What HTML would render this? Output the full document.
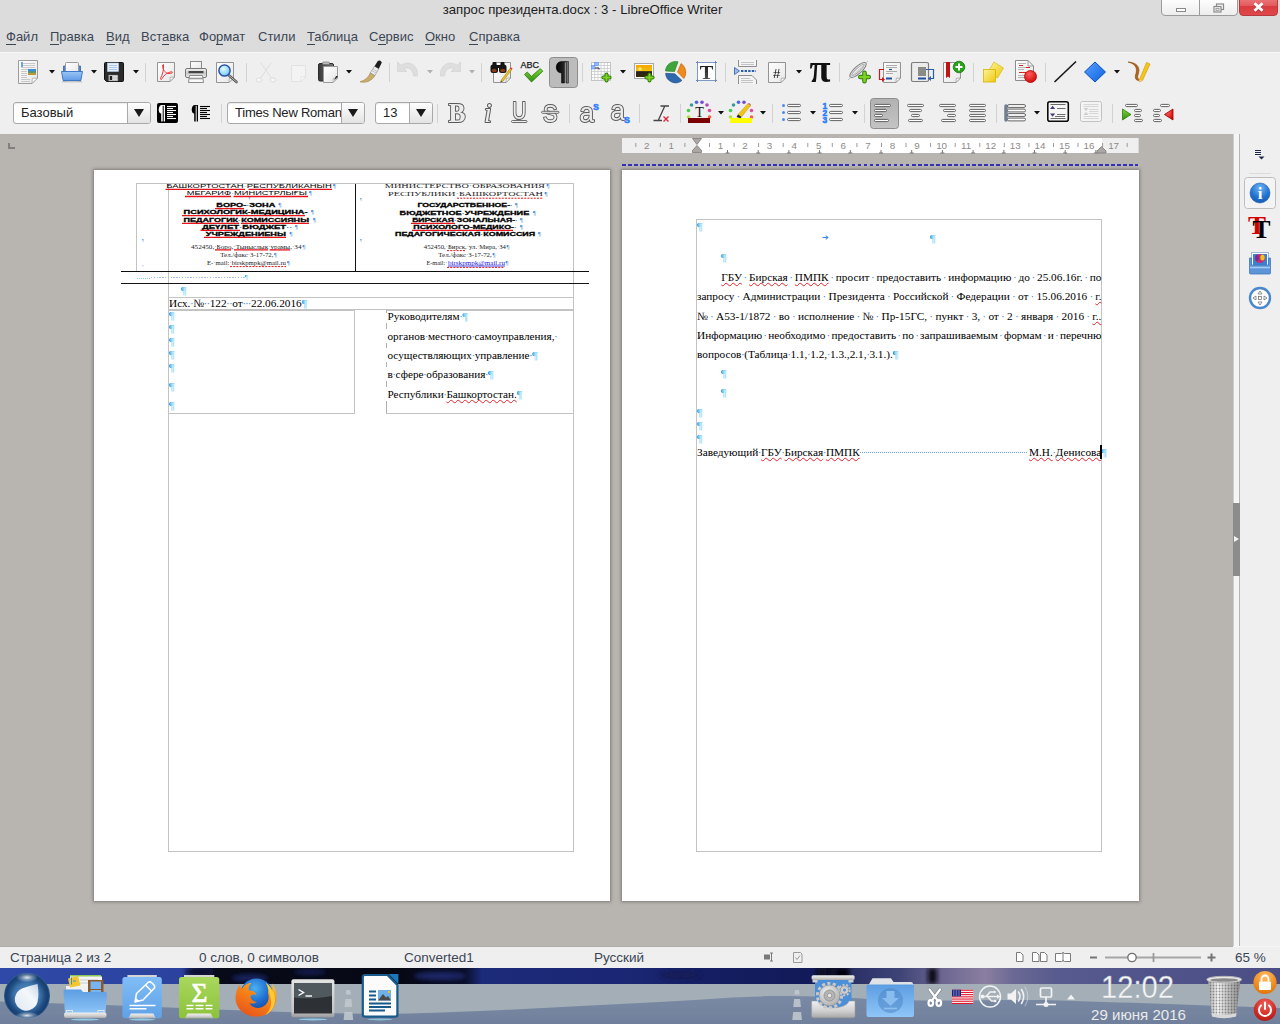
<!DOCTYPE html><html lang="ru"><head><meta charset="utf-8"><title>запрос президента.docx : 3 - LibreOffice Writer</title><style>
*{box-sizing:border-box}
html,body{margin:0;padding:0}
body{width:1280px;height:1024px;overflow:hidden;position:relative;background:#b8b4b0;font-family:"Liberation Sans",sans-serif;font-size:13px;color:#2e3436}
.abs,.t1,.t2,.h,.ui{position:absolute}
#title{position:absolute;left:0;top:0;width:1280px;height:52px;background:#dcdcdc}
#title .cap{position:absolute;left:0;width:1165px;top:2px;text-align:center;font-size:13.2px;color:#1c1c1c;line-height:16px}
.menu{position:absolute;top:28px;font-size:13px;line-height:18px;color:#3b4655}
.menu .mu{position:absolute;top:15.5px;height:1px;background:#3b4655}
#tb{position:absolute;left:0;top:52px;width:1280px;height:82px;background:#efefef;border-top:1px solid #f7f7f7}
.sep{position:absolute;width:1px;height:20px;background:#cfcfcf}
.dd{position:absolute;width:0;height:0;border-left:3px solid transparent;border-right:3px solid transparent;border-top:4px solid #1a1a1a}
.dd.dis{border-top-color:#c4c4c4}
.combo{position:absolute;height:22px;background:#fff;border:1px solid #a9a9a9;border-radius:3px;font-size:13px;line-height:20px;color:#222;padding-left:7px;overflow:hidden;white-space:nowrap;box-shadow:inset 0 1px 1px rgba(0,0,0,.08)}
.combo .btn{position:absolute;right:0;top:0;width:23px;height:20px;border-left:1px solid #a9a9a9;background:linear-gradient(#fdfdfd,#e3e3e3)}
.combo .btn:after{content:"";position:absolute;left:6px;top:6px;border-left:5px solid transparent;border-right:5px solid transparent;border-top:8px solid #1a1a1a}
.pressed{position:absolute;background:linear-gradient(#b4b4b4,#c2c2c2);border:1px solid #8e8e8e;border-radius:3px}
svg{position:absolute;overflow:visible}
#doc{position:absolute;left:0;top:134px;width:1233px;height:812px;background:#b8b4b0;overflow:hidden}
.page{position:absolute;background:#fff;box-shadow:0 0 3px 1px rgba(60,55,50,.45)}
.fr{position:absolute;border:1px solid #c3c3c3}
.t1,.t2,.t3{position:absolute;font-family:"Liberation Serif",serif;color:#000;white-space:nowrap;line-height:14px}
.t2{font-size:11.27px}
.t1{font-size:11.2px}
.t3{font-size:11.27px}
i{font-style:normal;display:inline-block;width:.25em;text-indent:-.04em;color:#3d7fd6;overflow:visible}
b.p,.pm{text-shadow:.6px 0 0 rgba(140,212,245,.75);background:linear-gradient(90deg,#2a82d6 0,#2a82d6 44%,#86d2f4 50%,#86d2f4 100%);-webkit-background-clip:text;background-clip:text;-webkit-text-fill-color:transparent}
b.p{font-weight:normal}
.jl{display:flex;justify-content:space-between}
.jl i{width:auto;text-indent:0;margin:0 -.04em}
.sq{text-decoration:underline wavy #e8202a;text-decoration-thickness:.55px;text-underline-offset:.6px;text-decoration-skip-ink:none}
.pm{position:absolute;font-family:"Liberation Serif",serif;font-size:11.27px;line-height:14px;color:#3d7fd6}
#status{position:absolute;left:0;top:946px;width:1280px;height:22px;background:#efefef;border-top:1px solid #f6f6f6;font-size:13.5px;color:#3b4655;line-height:21px}
#status span{position:absolute;top:0;white-space:nowrap}
#side{position:absolute;left:1233px;top:134px;width:47px;height:812px;background:#efefef}
#task{position:absolute;left:0;top:968px;width:1280px;height:56px;overflow:hidden;background:#2d3f8c}
</style></head><body>
<div id="title"><div class="cap">запрос президента.docx : 3 - LibreOffice Writer</div>
<div class="menu" style="left:6px">Файл<span class="mu" style="left:0px;width:9.9px"></span></div>
<div class="menu" style="left:50px">Правка<span class="mu" style="left:0px;width:9.3px"></span></div>
<div class="menu" style="left:106px">Вид<span class="mu" style="left:0px;width:8.7px"></span></div>
<div class="menu" style="left:141px">Вставка<span class="mu" style="left:21.1px;width:7.1px"></span></div>
<div class="menu" style="left:199px">Формат<span class="mu" style="left:17.1px;width:7.2px"></span></div>
<div class="menu" style="left:258px">Стили</div>
<div class="menu" style="left:307px">Таблица<span class="mu" style="left:0px;width:8px"></span></div>
<div class="menu" style="left:369px">Сервис<span class="mu" style="left:9.4px;width:7.2px"></span></div>
<div class="menu" style="left:425px">Окно<span class="mu" style="left:0px;width:10.1px"></span></div>
<div class="menu" style="left:469px">Справка<span class="mu" style="left:0px;width:9.4px"></span></div>
<div class="abs" style="left:1161px;top:-3px;width:39px;height:19px;border:1px solid #9b9b9b;border-radius:0 0 0 4px;background:linear-gradient(#fff,#ededed)"></div><div class="abs" style="left:1199px;top:-3px;width:39px;height:19px;border:1px solid #9b9b9b;border-radius:0 0 4px 0;background:linear-gradient(#fff,#ededed)"></div><div class="abs" style="left:1239px;top:-3px;width:39px;height:19px;border:1px solid #b8393c;border-radius:0 0 4px 4px;background:linear-gradient(#ec7a7c 0,#e35a5d 45%,#d93c40 50%,#e0474a 100%)"></div><svg style="left:1160px;top:0" width="120" height="18" viewBox="1160 0 120 18"><rect x="1176.5" y="8.5" width="9" height="3" fill="#fff" stroke="#8a8a8a" stroke-width="1"/><rect x="1216.5" y="4" width="7" height="5.5" fill="none" stroke="#8a8a8a" stroke-width="1.2"/><rect x="1214" y="6.5" width="7" height="5.5" fill="#f4f4f4" stroke="#8a8a8a" stroke-width="1.2"/><rect x="1216" y="8.3" width="3" height="2" fill="none" stroke="#8a8a8a" stroke-width="0.8"/><path d="M1254.5 3.2 L1262.5 10.8 M1262.5 3.2 L1254.5 10.8" stroke="#8c2022" stroke-width="3.6" opacity=".35" transform="translate(0,.8)"/><path d="M1254.5 3.2 L1262.5 10.8 M1262.5 3.2 L1254.5 10.8" stroke="#fff" stroke-width="2.8"/></svg>
</div>
<div id="tb">
<svg style="left:0;top:-1px" width="1280" height="82" viewBox="0 52 1280 82"><defs>
<linearGradient id="gpage" x1="0" y1="0" x2="1" y2="1"><stop offset="0" stop-color="#ffffff"/><stop offset="1" stop-color="#e6e6e6"/></linearGradient>
<linearGradient id="gblue" x1="0" y1="0" x2="0" y2="1"><stop offset="0" stop-color="#9cc6f6"/><stop offset="1" stop-color="#5f9ae6"/></linearGradient>
<linearGradient id="gdia" x1="0" y1="0" x2="1" y2="1"><stop offset="0" stop-color="#5aa5ff"/><stop offset="1" stop-color="#0b5fe0"/></linearGradient>
<linearGradient id="gdark" x1="0" y1="0" x2="1" y2="0"><stop offset="0" stop-color="#3a3a3a"/><stop offset="1" stop-color="#777"/></linearGradient>
<linearGradient id="gmetal" x1="0" y1="0" x2="0" y2="1"><stop offset="0" stop-color="#f4f4f4"/><stop offset=".5" stop-color="#c9c9c9"/><stop offset="1" stop-color="#efefef"/></linearGradient>
<linearGradient id="gyel" x1="0" y1="0" x2="1" y2="1"><stop offset="0" stop-color="#fdf39a"/><stop offset="1" stop-color="#edc80e"/></linearGradient>
<radialGradient id="glens" cx=".4" cy=".35" r=".7"><stop offset="0" stop-color="#e8fbff"/><stop offset="1" stop-color="#67c6f2"/></radialGradient>
<radialGradient id="gred" cx=".4" cy=".3" r=".8"><stop offset="0" stop-color="#ff5a5a"/><stop offset="1" stop-color="#cc0000"/></radialGradient>
<linearGradient id="gsun" x1="0" y1="0" x2="0" y2="1"><stop offset="0" stop-color="#f7a400"/><stop offset=".5" stop-color="#f2c200"/><stop offset=".55" stop-color="#222"/><stop offset="1" stop-color="#3a2a00"/></linearGradient>
<linearGradient id="gpil" x1="0" y1="0" x2="1" y2="0"><stop offset="0" stop-color="#000"/><stop offset=".6" stop-color="#222"/><stop offset="1" stop-color="#8a8a8a"/></linearGradient>
<linearGradient id="gT" x1="0" y1="0" x2="0" y2="1"><stop offset="0" stop-color="#111"/><stop offset="1" stop-color="#5a5a5a"/></linearGradient><linearGradient id="ggreen" x1="0" y1="0" x2="0" y2="1"><stop offset="0" stop-color="#7fd63a"/><stop offset="1" stop-color="#2f8d0c"/></linearGradient>
<linearGradient id="gpress" x1="0" y1="0" x2="0" y2="1"><stop offset="0" stop-color="#b2b2b2"/><stop offset="1" stop-color="#c4c4c4"/></linearGradient></defs><path d="M18.5 60.5 H37.5 V78 L32 83.5 H18.5 Z" fill="url(#gpage)" stroke="#9c9c9c" stroke-width="1" stroke-linejoin="round"/><path d="M37.5 78 L32 83.5 L32.3 78.3 Z" fill="#fff" stroke="#9c9c9c" stroke-width=".7" stroke-linejoin="round"/><path d="M21 63.5 H35" stroke="#c9c9c9" stroke-width="1"/><path d="M21 65.5 H35" stroke="#c9c9c9" stroke-width="1"/><path d="M21 67.5 H35" stroke="#c9c9c9" stroke-width="1"/><path d="M21 69.5 H35" stroke="#c9c9c9" stroke-width="1"/><path d="M21 71.5 H27" stroke="#c9c9c9" stroke-width="1"/><path d="M21 73.5 H27" stroke="#c9c9c9" stroke-width="1"/><path d="M21 75.5 H27" stroke="#c9c9c9" stroke-width="1"/><path d="M21 77.5 H27" stroke="#c9c9c9" stroke-width="1"/><path d="M21 79.5 H30" stroke="#c9c9c9" stroke-width="1"/><path d="M21 81.5 H30" stroke="#c9c9c9" stroke-width="1"/><rect x="21" y="62" width="2" height="5" fill="#6fa3e0"/><rect x="28" y="69" width="8" height="6" fill="#3f8fd6"/><rect x="28" y="72.5" width="8" height="2.5" fill="#b79a3a"/><rect x="28" y="71.5" width="8" height="1.2" fill="#5d9a4a"/><path d="M49 70 h6 l-3 3.6 z" fill="#111"/><path d="M63.5 66 h3 v15 h-3 z M77.5 66 h3 v15 h-3z" fill="#4a86d6" stroke="#3465a4" stroke-width=".8"/><rect x="65.5" y="62.5" width="13" height="12" rx="1" fill="url(#gpage)" stroke="#9a9a9a"/><path d="M61.5 71.5 H82.500 L80.8 80.5 H63.2 Z" fill="url(#gblue)" stroke="#3f78c9" stroke-width="1" stroke-linejoin="round"/><path d="M62 81.8 H82" stroke="#b4b4b4" stroke-width="1"/><path d="M91 70 h6 l-3 3.6 z" fill="#111"/><path d="M104.500 63.5 q0-1 1-1 h17 q1 0 1 1 v17 q0 1-1 1 h-16 l-2 -2 z" fill="#2b2b2b" stroke="#111" stroke-width="1"/><rect x="107.500" y="63" width="11" height="8.5" fill="#e6f0fb" stroke="#b9cfe8" stroke-width=".6"/><path d="M109 65.500 h8 M109 67.500 h8 M109 69.500 h8" stroke="#9dbfe6" stroke-width=".8"/><rect x="108.500" y="75" width="9.5" height="6" fill="url(#gmetal)" stroke="#555" stroke-width=".6"/><rect x="109.700" y="76" width="2.400" height="4" fill="#222"/><path d="M133 70 h6 l-3 3.6 z" fill="#111"/><path d="M145.5 63 V82" stroke="#d2d2d2" stroke-width="1"/><path d="M157.5 62.5 H174.5 V77 L170 81.5 H157.5 Z" fill="url(#gpage)" stroke="#939393" stroke-width="1" stroke-linejoin="round"/><path d="M174.5 77 L170 81.5 L170.3 77.3 Z" fill="#fff" stroke="#939393" stroke-width=".7" stroke-linejoin="round"/><path d="M163.500 64.500 c-1.500 0 -1 3 0 5 c1.500 3 4 5 8.500 3.500 c1 -.4 .4 -1.600 -1 -1.200 c-4 1 -7 3 -9 7 c-.6 1.200 -2 .6 -1.400 -.6 c2 -4 3.300 -8 2.900 -13.700 z" fill="none" stroke="#e8262a" stroke-width=".9" stroke-linejoin="round"/><rect x="190.500" y="61.500" width="11" height="8" fill="url(#gpage)" stroke="#8a8a8a"/><rect x="185.500" y="68.500" width="21" height="9" rx="1.500" fill="url(#gmetal)" stroke="#777"/><rect x="188.500" y="71" width="15" height="2.200" fill="#444"/><path d="M189.500 75.500 H202.500 L203.500 82.500 H188.500 Z" fill="#fafafa" stroke="#8a8a8a"/><path d="M189 78.500 h14" stroke="#999" stroke-width="1.600"/><path d="M216.5 62.5 H233.5 V78 L229 82.5 H216.5 Z" fill="url(#gpage)" stroke="#939393" stroke-width="1" stroke-linejoin="round"/><path d="M233.5 78 L229 82.5 L229.3 78.3 Z" fill="#fff" stroke="#939393" stroke-width=".7" stroke-linejoin="round"/><path d="M228.500 75 L236.500 82" stroke="#555" stroke-width="2.600" stroke-linecap="round"/><path d="M228.500 75 L236.500 82" stroke="#b9b9b9" stroke-width="1" stroke-linecap="round"/><circle cx="224.500" cy="70.500" r="5.600" fill="url(#glens)" stroke="#2c55a8" stroke-width="1.500"/><path d="M246.5 63 V82" stroke="#d2d2d2" stroke-width="1"/><g stroke="#dedede" fill="none" stroke-width="1"><path d="M261 63 L272 79 M271 63 L260 79"/><ellipse cx="259" cy="80" rx="3" ry="2" fill="#f6f6f6"/><ellipse cx="273" cy="80" rx="3" ry="2" fill="#f6f6f6"/></g><path d="M291.500 65.500 H305.500 V77 L301 81.500 H291.500 Z" fill="#f3f3f3" stroke="#e2e2e2"/><path d="M305.500 77 L301 81.500 L301 77 Z" fill="#fafafa" stroke="#dcdcdc" stroke-width=".7"/><rect x="318.500" y="63.500" width="15" height="17.500" rx="1.500" fill="url(#gdark)" stroke="#2a2a2a"/><rect x="322.500" y="62" width="7" height="2.600" rx="1" fill="#bdbdbd" stroke="#666" stroke-width=".6"/><path d="M323.5 66.5 H337.5 V78 L333 82.5 H323.5 Z" fill="url(#gpage)" stroke="#9a9a9a" stroke-width="1" stroke-linejoin="round"/><path d="M337.5 78 L333 82.5 L333.3 78.3 Z" fill="#fff" stroke="#9a9a9a" stroke-width=".7" stroke-linejoin="round"/><path d="M334 80.500 l3.500 -3.500 v-1 h-1.500 z" fill="#222"/><path d="M346 70 h6 l-3 3.6 z" fill="#111"/><path d="M360 81.800 C365 80.500 368.500 77.500 370.500 72.500 L375 75.300 C372.500 80.500 366 83.500 360 81.800 Z" fill="#c9ad6a" stroke="#9d8243" stroke-width=".6"/><path d="M370.300 72.800 L374.500 66.200 L378.800 68.800 L375 75.500 Z" fill="#ececec" stroke="#8a8a8a" stroke-width=".6"/><path d="M372 70.500 l4 2.500 M373 69 l4 2.500" stroke="#aaa" stroke-width=".6"/><path d="M374.500 66.200 L377.800 61 Q380.500 59.800 381.800 62.400 L378.800 68.800 Z" fill="#1e1e1e"/><path d="M389.5 63 V82" stroke="#d2d2d2" stroke-width="1"/><path d="M397.500 62 L397.500 71.500 L407 71.500 L404 68.600 C408 66.500 413 69 413.500 76 L417.500 76 C418.500 66 410 59.500 401 65.200 Z" fill="#dedede" stroke="#d0d0d0" stroke-width=".6"/><path d="M427 70 h6 l-3 3.6 z" fill="#b0b0b0"/><path d="M460.500 62 L460.500 71.500 L451 71.500 L454 68.600 C450 66.500 445 69 444.500 76 L440.500 76 C439.500 66 448 59.500 457 65.200 Z" fill="#dedede" stroke="#d0d0d0" stroke-width=".6"/><path d="M469 70 h6 l-3 3.6 z" fill="#b0b0b0"/><path d="M481.5 63 V82" stroke="#d2d2d2" stroke-width="1"/><path d="M493.5 62.5 H510.5 V78 L506 82.5 H493.5 Z" fill="url(#gpage)" stroke="#939393" stroke-width="1" stroke-linejoin="round"/><path d="M510.5 78 L506 82.5 L506.3 78.3 Z" fill="#fff" stroke="#939393" stroke-width=".7" stroke-linejoin="round"/><path d="M501 80.500 L510 68.500 L511.600 69.700 L502.600 81.600 Z" fill="#f0c419" stroke="#8a6d00" stroke-width=".5"/><path d="M510 68.500 l1 -1.300 l1.600 1.200 l-1 1.300z" fill="#e03a3a"/><path d="M501 80.500 l-.6 1.800 l1.900 -.8z" fill="#333"/><g fill="#151515"><rect x="490.500" y="64.500" width="7.500" height="8.500" rx="2.500"/><rect x="499" y="64.500" width="7.500" height="8.500" rx="2.500"/><rect x="492.500" y="62" width="4" height="4" rx="1"/><rect x="500.500" y="62" width="4" height="4" rx="1"/><rect x="496" y="65" width="5" height="3"/></g><ellipse cx="494.200" cy="70.500" rx="2.500" ry="1.800" fill="#8a3a12"/><ellipse cx="502.800" cy="70.500" rx="2.500" ry="1.800" fill="#8a3a12"/><text x="520.500" y="68" font-family="Liberation Sans, sans-serif" font-size="8.500" fill="#1a1a1a" stroke="#1a1a1a" stroke-width=".25" textLength="18.500" lengthAdjust="spacingAndGlyphs">ABC</text><path d="M524.500 74.500 L527.200 72 L531.500 76.300 L540.300 68.600 L542.800 71.200 L531.500 82 Z" fill="url(#ggreen)" stroke="#2c7a0c" stroke-width=".8" stroke-linejoin="round"/><rect x="549.500" y="57.500" width="28" height="30" rx="3" fill="#bcbcbc" stroke="#8e8e8e"/><path d="M568.500 61.500 V83 H566 V62 H564.500 V83 H561.500 V73 C554.500 73 554.500 61.500 561.500 61.500 Z" fill="url(#gpil)" stroke="#000" stroke-width=".5"/><path d="M582.5 63 V82" stroke="#d2d2d2" stroke-width="1"/><rect x="591.500" y="62.500" width="19" height="18" fill="#fff" stroke="#c4c4c4"/><path d="M594.7 62.500 V80.500" stroke="#c9c9c9" stroke-width=".8"/><path d="M597.9 62.500 V80.500" stroke="#c9c9c9" stroke-width=".8"/><path d="M601.1 62.500 V80.500" stroke="#c9c9c9" stroke-width=".8"/><path d="M604.3 62.500 V80.500" stroke="#c9c9c9" stroke-width=".8"/><path d="M607.5 62.500 V80.500" stroke="#c9c9c9" stroke-width=".8"/><path d="M591.500 65.5 H610.500" stroke="#c9c9c9" stroke-width=".8"/><path d="M591.500 68.5 H610.500" stroke="#c9c9c9" stroke-width=".8"/><path d="M591.500 71.5 H610.500" stroke="#c9c9c9" stroke-width=".8"/><path d="M591.500 74.5 H610.500" stroke="#c9c9c9" stroke-width=".8"/><path d="M591.500 77.5 H610.500" stroke="#c9c9c9" stroke-width=".8"/><rect x="594.500" y="62.500" width="4" height="3" fill="#8fb8ff" stroke="#5f93f0" stroke-width=".6"/><rect x="591.500" y="65.500" width="3.500" height="3.500" fill="#8fb8ff" stroke="#5f93f0" stroke-width=".6"/><path d="M595 68 h4 v1.500" stroke="#333" stroke-width="1" fill="none"/><path d="M603.4 77.5 H609.6 M606.5 74.4 V80.6" stroke="#2f7a10" stroke-width="4.0" stroke-linecap="round"/><path d="M603.4 77.5 H609.6 M606.5 74.4 V80.6" stroke="#7ed321" stroke-width="2.0" stroke-linecap="round"/><path d="M620 70 h6 l-3 3.6 z" fill="#111"/><rect x="634.500" y="63.500" width="19" height="15" fill="#fff" stroke="#a8a8a8"/><rect x="636" y="65" width="16" height="12" fill="url(#gsun)"/><circle cx="640" cy="69" r="1.800" fill="#ffe680"/><path d="M646.4 77.5 H652.6 M649.5 74.4 V80.6" stroke="#2f7a10" stroke-width="4.0" stroke-linecap="round"/><path d="M646.4 77.5 H652.6 M649.5 74.4 V80.6" stroke="#7ed321" stroke-width="2.0" stroke-linecap="round"/><path d="M674.500 71.500 L665.500 71 A10 10 0 0 1 678 61.800 Z" fill="#3fa53a" stroke="#1d7a1f" stroke-width=".6"/><path d="M677.500 72 L681 63.500 A10.500 10.500 0 0 1 683.800 78.500 Z" fill="#f08a1c" stroke="#b85d00" stroke-width=".6"/><path d="M674.800 73.800 L682 80.500 A10 10 0 0 1 665.600 73.300 Z" fill="#2f68ae" stroke="#1b4580" stroke-width=".6"/><rect x="697.500" y="62.500" width="18" height="18" fill="#fff" stroke="#7f98c4"/><path d="M696 62.500 h2 M715 62.500 h2 M696 80.500 h2 M715 80.500 h2 M697.500 61 v2 M715.500 61 v2 M697.500 79 v3 M715.500 79 v3" stroke="#6b86b8" stroke-width="1"/><g opacity=".995"><text x="706.500" y="78.500" text-anchor="middle" font-family="Liberation Serif, serif" font-weight="bold" font-size="19.500" fill="url(#gT)" textLength="13.500" lengthAdjust="spacingAndGlyphs">T</text></g><path d="M725.5 63 V82" stroke="#d2d2d2" stroke-width="1"/><path d="M738.500 60 V66.500 H756.500 V60" fill="#f4f4f4" stroke="#8f8f8f"/><path d="M741 62.500 h13 M741 64.500 h13" stroke="#c4c4c4"/><path d="M738.500 84 V75.500 H752 L756.500 80 V84" fill="#f4f4f4" stroke="#8f8f8f"/><path d="M741 78.500 h9 M741 80.500 h12 M741 82.500 h12" stroke="#c4c4c4"/><path d="M741 71 H756" stroke="#2a5db0" stroke-width="2" stroke-dasharray="2.400 1.200"/><path d="M734.500 67.500 L739.500 71 L734.500 74.500 Z" fill="#9db9e4" stroke="#2a5db0" stroke-width=".8"/><path d="M768.5 62.5 H785.5 V78 L781 82.5 H768.5 Z" fill="url(#gpage)" stroke="#939393" stroke-width="1" stroke-linejoin="round"/><path d="M785.5 78 L781 82.5 L781.3 78.3 Z" fill="#fff" stroke="#939393" stroke-width=".7" stroke-linejoin="round"/><g opacity=".995"><text x="776.500" y="77.500" text-anchor="middle" font-family="Liberation Sans, sans-serif" font-size="13" fill="#000">#</text></g><path d="M796 70 h6 l-3 3.6 z" fill="#111"/><g opacity=".995"><text x="820" y="81.500" text-anchor="middle" font-family="Liberation Serif, serif" font-size="40" font-weight="bold" fill="#111" textLength="21" lengthAdjust="spacingAndGlyphs">π</text></g><path d="M839.5 63 V82" stroke="#d2d2d2" stroke-width="1"/><g fill="none" stroke="#7d7d7d" stroke-width="1"><ellipse cx="858" cy="70" rx="10.500" ry="3.600" transform="rotate(-42 858 70)"/><ellipse cx="858" cy="70" rx="8" ry="1.800" transform="rotate(-42 858 70)" stroke="#a5a5a5"/><path d="M848 80 L868 61" stroke="#b5b5b5" stroke-width=".8"/></g><path d="M860.3 77 H868.7 M864.5 72.8 V81.2" stroke="#2f7a10" stroke-width="4.6" stroke-linecap="round"/><path d="M860.3 77 H868.7 M864.5 72.8 V81.2" stroke="#7ed321" stroke-width="2.6" stroke-linecap="round"/><path d="M883.5 62.5 H900.5 V78 L896 82.5 H883.5 Z" fill="url(#gpage)" stroke="#939393" stroke-width="1" stroke-linejoin="round"/><path d="M900.5 78 L896 82.5 L896.3 78.3 Z" fill="#fff" stroke="#939393" stroke-width=".7" stroke-linejoin="round"/><path d="M886 65.500 h11 M886 67.500 h11 M886 71.500 h11 M886 73.500 h7" stroke="#9b9b9b" stroke-width=".8"/><path d="M889 69.500 h3" stroke="#1f4fa0" stroke-width="1.200"/><path d="M886 78.500 h6" stroke="#1f4fa0" stroke-width="2"/><path d="M884 69.500 H879.500 V79.500 H883" fill="none" stroke="#d01818" stroke-width="1.200"/><path d="M882 77 l3 2.500 l-3 2.500z" fill="#d01818"/><rect x="911.500" y="62.500" width="17" height="19" rx="1.500" fill="#ececec" stroke="#7c7c7c" stroke-width="1.200"/><rect x="918" y="67" width="8" height="9" fill="#8a8a86"/><path d="M918 78.500 h8" stroke="#1f4fa0" stroke-width="2"/><circle cx="914" cy="69" r=".6" fill="#fff"/><circle cx="914" cy="74" r=".6" fill="#fff"/><path d="M926 69.500 H933.500 V78.500 H930" fill="none" stroke="#2a5db0" stroke-width="1.200"/><path d="M931 76 l-3 2.500 l3 2.500z" fill="#2a5db0"/><path d="M943.5 62.5 H960.5 V78 L956 82.5 H943.5 Z" fill="url(#gpage)" stroke="#939393" stroke-width="1" stroke-linejoin="round"/><path d="M960.5 78 L956 82.5 L956.3 78.3 Z" fill="#fff" stroke="#939393" stroke-width=".7" stroke-linejoin="round"/><path d="M946 62 h4 v16 l-2 -1.600 l-2 1.600z" fill="#c01414"/><circle cx="959" cy="67" r="5.800" fill="#27a318" stroke="#167a0c" stroke-width=".8"/><path d="M955.500 67 h7 M959 63.500 v7" stroke="#fff" stroke-width="2"/><path d="M973.5 63 V82" stroke="#d2d2d2" stroke-width="1"/><path d="M994 62 L1003.500 68 L997.500 78 L988 72 Z" fill="url(#gyel)" stroke="#d8b400" stroke-width=".6"/><rect x="983.500" y="69.500" width="12" height="12.500" fill="url(#gyel)" stroke="#d8b400" stroke-width=".8"/><path d="M1015.500 60.500 H1028 L1033.500 66 V80.500 H1015.500 Z" fill="url(#gpage)" stroke="#8b8b8b"/><path d="M1028 60.500 V66 H1033.500" fill="none" stroke="#8b8b8b" stroke-width=".8"/><path d="M1018 63.500 h8 M1018 67.500 h12 M1018 69.500 h6 M1018 75.500 h6 M1018 77.500 h6" stroke="#b5b5b5"/><path d="M1019 65.500 h4 M1026 67.500 h4 M1019 72.500 h7" stroke="#e02020" stroke-width="1.200"/><circle cx="1030.500" cy="76.500" r="6" fill="url(#gred)" stroke="#b00000" stroke-width=".8"/><path d="M1045.5 63 V82" stroke="#d2d2d2" stroke-width="1"/><path d="M1054.500 82 L1076 61.500" stroke="#161616" stroke-width="1.600"/><path d="M1095 62 L1105.500 72 L1095 82 L1084.500 72 Z" fill="url(#gdia)" stroke="#0d4fc0" stroke-width="1" stroke-linejoin="round"/><path d="M1114 70 h6 l-3 3.6 z" fill="#111"/><path d="M1128 62 C1137 64 1137.500 70 1135.500 75 C1134.500 79 1137 81.500 1140 80 C1137 79 1137.500 76.500 1138.500 73.500 C1140.500 66.500 1136 62.500 1128 62 Z" fill="#b4651c" stroke="#8a4508" stroke-width=".6"/><path d="M1139.500 79.500 L1146.500 62.500 L1150 64 L1142.500 80.500 L1139 82 Z" fill="#f6c516" stroke="#c99800" stroke-width=".6"/><path d="M1139.500 79.500 l3 1 l-3.500 1.500z" fill="#e9c9a0"/><rect x="157" y="103" width="21" height="20" rx="2" fill="#000"/><path d="M165 105 V121.500 H163.700 V105.800 H162.700 V121.500 H161.200 V113.500 C157.800 113.500 157.800 105 162 105 Z" fill="#fff"/><path d="M167 106.5 H176" stroke="#fff" stroke-width="1.100"/><path d="M167 108.5 H173" stroke="#fff" stroke-width="1.100"/><path d="M167 110.5 H176" stroke="#fff" stroke-width="1.100"/><path d="M167 112.5 H173" stroke="#fff" stroke-width="1.100"/><path d="M167 114.5 H176" stroke="#fff" stroke-width="1.100"/><path d="M167 116.5 H173" stroke="#fff" stroke-width="1.100"/><path d="M167 118.5 H176" stroke="#fff" stroke-width="1.100"/><path d="M198 105 V121.500 H196.700 V105.800 H195.700 V121.500 H194.200 V113.500 C190.800 113.500 190.800 105 195 105 Z" fill="#000"/><path d="M200 106.5 H210" stroke="#000" stroke-width="1.100"/><path d="M200 108.5 H207" stroke="#000" stroke-width="1.100"/><path d="M200 110.5 H210" stroke="#000" stroke-width="1.100"/><path d="M200 112.5 H207" stroke="#000" stroke-width="1.100"/><path d="M200 114.5 H210" stroke="#000" stroke-width="1.100"/><path d="M200 116.5 H207" stroke="#000" stroke-width="1.100"/><path d="M200 118.5 H210" stroke="#000" stroke-width="1.100"/><path d="M221.5 104 V123" stroke="#d2d2d2" stroke-width="1"/><path d="M437.5 104 V123" stroke="#d2d2d2" stroke-width="1"/><g opacity=".995"><text x="448.500" y="122" font-family="Liberation Serif, serif" font-weight="bold" font-size="27.500" fill="#ececec" stroke="#5a5a5a" stroke-width="2" stroke-linejoin="round" paint-order="stroke" textLength="17" lengthAdjust="spacingAndGlyphs">B</text><text x="484" y="122" font-family="Liberation Serif, serif" font-style="italic" font-size="28" fill="#ececec" stroke="#5a5a5a" stroke-width="2" stroke-linejoin="round" paint-order="stroke">i</text><text x="512.300" y="119" font-family="Liberation Sans, sans-serif" font-size="23" fill="#ececec" stroke="#5a5a5a" stroke-width="2" stroke-linejoin="round" paint-order="stroke" textLength="14" lengthAdjust="spacingAndGlyphs">U</text><rect x="511.500" y="120.500" width="15.500" height="2" rx="1" fill="#f2f2f2" stroke="#5c5c5c" stroke-width=".9"/><text x="543" y="121.500" font-family="Liberation Sans, sans-serif" font-size="24.500" fill="#ececec" stroke="#5a5a5a" stroke-width="2" stroke-linejoin="round" paint-order="stroke" textLength="14.500" lengthAdjust="spacingAndGlyphs">S</text><rect x="541.500" y="111.300" width="17.500" height="2" rx="1" fill="#f2f2f2" stroke="#5c5c5c" stroke-width=".9"/><text x="579.500" y="121.500" font-family="Liberation Sans, sans-serif" font-size="28" fill="#ececec" stroke="#5a5a5a" stroke-width="2" stroke-linejoin="round" paint-order="stroke" textLength="14.500" lengthAdjust="spacingAndGlyphs">a</text><text x="610.500" y="119.500" font-family="Liberation Sans, sans-serif" font-size="28" fill="#ececec" stroke="#5a5a5a" stroke-width="2" stroke-linejoin="round" paint-order="stroke" textLength="14.500" lengthAdjust="spacingAndGlyphs">a</text></g><path d="M569.5 104 V123" stroke="#d2d2d2" stroke-width="1"/><text x="593" y="110" font-family="Liberation Sans, sans-serif" font-size="11" font-weight="bold" fill="#2a7bff" stroke="#2a7bff" stroke-width=".4">s</text><text x="624" y="123" font-family="Liberation Sans, sans-serif" font-size="11" font-weight="bold" fill="#2a7bff" stroke="#2a7bff" stroke-width=".4">s</text><path d="M639.5 104 V123" stroke="#d2d2d2" stroke-width="1"/><path d="M664.800 106 L658.200 120.500 M660.500 106 H669 M653.500 120.500 H662" stroke="#444" stroke-width="1.300" fill="none"/><path d="M663.500 116.500 l5 5 M668.500 116.500 l-5 5" stroke="#e0283c" stroke-width="1.400"/><path d="M680.5 104 V123" stroke="#d2d2d2" stroke-width="1"/><circle cx="688.5" cy="117" r="1.800" fill="#a8e23a"/><circle cx="688.5" cy="110.5" r="1.800" fill="#3ed04a"/><circle cx="691.5" cy="105" r="1.800" fill="#3a9a9a"/><circle cx="696.5" cy="102.2" r="1.800" fill="#4a6ae0"/><circle cx="702" cy="102.2" r="1.800" fill="#7a4ad0"/><circle cx="707" cy="105" r="1.800" fill="#b04ac0"/><circle cx="709.5" cy="110.5" r="1.800" fill="#e04aa0"/><circle cx="709.5" cy="117" r="1.800" fill="#ff5a4a"/><text x="699.500" y="116.500" text-anchor="middle" font-family="Liberation Serif, serif" font-size="14" fill="#111">T</text><rect x="688" y="118" width="22" height="5" fill="#7d0000"/><path d="M718 111 h6 l-3 3.6 z" fill="#111"/><circle cx="730.5" cy="117" r="1.800" fill="#a8e23a"/><circle cx="730.5" cy="110.5" r="1.800" fill="#3ed04a"/><circle cx="733.5" cy="105" r="1.800" fill="#3a9a9a"/><circle cx="738.5" cy="102.2" r="1.800" fill="#4a6ae0"/><circle cx="744" cy="102.2" r="1.800" fill="#7a4ad0"/><circle cx="749" cy="105" r="1.800" fill="#b04ac0"/><circle cx="751.5" cy="110.5" r="1.800" fill="#e04aa0"/><circle cx="751.5" cy="117" r="1.800" fill="#ff5a4a"/><path d="M738 114.500 L748 103.500 L750.500 105.500 L741.500 117 Z" fill="#f0c419" stroke="#c99800" stroke-width=".5"/><path d="M738 114.500 l3.500 2.500 l-1 1.300 l-4 -1.200z" fill="#222"/><rect x="730" y="118" width="22" height="5" fill="#ffff00"/><path d="M760 111 h6 l-3 3.6 z" fill="#111"/><path d="M772.5 104 V123" stroke="#d2d2d2" stroke-width="1"/><circle cx="783.500" cy="105.5" r="1.500" fill="#4a8af4"/><rect x="787.5" y="104.4" width="13" height="2.2" rx="1.1" fill="#fff" stroke="#626262" stroke-width="1"/><circle cx="783.500" cy="112.5" r="1.500" fill="#4a8af4"/><rect x="787.5" y="111.4" width="13" height="2.2" rx="1.1" fill="#fff" stroke="#626262" stroke-width="1"/><circle cx="783.500" cy="119.5" r="1.500" fill="#4a8af4"/><rect x="787.5" y="118.4" width="13" height="2.2" rx="1.1" fill="#fff" stroke="#626262" stroke-width="1"/><path d="M810 111 h6 l-3 3.6 z" fill="#111"/><text x="822.500" y="108.7" font-family="Liberation Sans, sans-serif" font-size="8.500" font-weight="bold" fill="#2a7bff" stroke="#2a7bff" stroke-width=".5">1</text><rect x="829.5" y="104.4" width="13" height="2.2" rx="1.1" fill="#fff" stroke="#626262" stroke-width="1"/><text x="822.500" y="115.7" font-family="Liberation Sans, sans-serif" font-size="8.500" font-weight="bold" fill="#2a7bff" stroke="#2a7bff" stroke-width=".5">2</text><rect x="829.5" y="111.4" width="13" height="2.2" rx="1.1" fill="#fff" stroke="#626262" stroke-width="1"/><text x="822.500" y="122.7" font-family="Liberation Sans, sans-serif" font-size="8.500" font-weight="bold" fill="#2a7bff" stroke="#2a7bff" stroke-width=".5">3</text><rect x="829.5" y="118.4" width="13" height="2.2" rx="1.1" fill="#fff" stroke="#626262" stroke-width="1"/><path d="M852 111 h6 l-3 3.6 z" fill="#111"/><path d="M864.5 104 V123" stroke="#d2d2d2" stroke-width="1"/><rect x="870.500" y="98.500" width="28" height="30" rx="3" fill="url(#gpress)" stroke="#8e8e8e"/><rect x="874.5" y="104.4" width="16" height="2.2" rx="1.1" fill="#fff" stroke="#626262" stroke-width="1"/><rect x="874.5" y="109.4" width="12" height="2.2" rx="1.1" fill="#fff" stroke="#626262" stroke-width="1"/><rect x="874.5" y="114.4" width="8" height="2.2" rx="1.1" fill="#fff" stroke="#626262" stroke-width="1"/><rect x="874.5" y="119.4" width="14" height="2.2" rx="1.1" fill="#fff" stroke="#626262" stroke-width="1"/><rect x="907.5" y="104.4" width="16" height="2.2" rx="1.1" fill="#fff" stroke="#626262" stroke-width="1"/><rect x="909.5" y="109.4" width="12" height="2.2" rx="1.1" fill="#fff" stroke="#626262" stroke-width="1"/><rect x="911.5" y="114.4" width="8" height="2.2" rx="1.1" fill="#fff" stroke="#626262" stroke-width="1"/><rect x="908.5" y="119.4" width="14" height="2.2" rx="1.1" fill="#fff" stroke="#626262" stroke-width="1"/><rect x="939.5" y="104.4" width="16" height="2.2" rx="1.1" fill="#fff" stroke="#626262" stroke-width="1"/><rect x="943.5" y="109.4" width="12" height="2.2" rx="1.1" fill="#fff" stroke="#626262" stroke-width="1"/><rect x="947.5" y="114.4" width="8" height="2.2" rx="1.1" fill="#fff" stroke="#626262" stroke-width="1"/><rect x="941.5" y="119.4" width="14" height="2.2" rx="1.1" fill="#fff" stroke="#626262" stroke-width="1"/><rect x="969.5" y="104.4" width="16" height="2.2" rx="1.1" fill="#fff" stroke="#626262" stroke-width="1"/><rect x="969.5" y="109.4" width="16" height="2.2" rx="1.1" fill="#fff" stroke="#626262" stroke-width="1"/><rect x="969.5" y="114.4" width="16" height="2.2" rx="1.1" fill="#fff" stroke="#626262" stroke-width="1"/><rect x="969.5" y="119.4" width="16" height="2.2" rx="1.1" fill="#fff" stroke="#626262" stroke-width="1"/><path d="M996.5 104 V123" stroke="#d2d2d2" stroke-width="1"/><path d="M1006 106 V120" stroke="#6f7f8f" stroke-width="3.500" stroke-linecap="round"/><rect x="1007.5" y="104.6" width="18" height="2.8" rx="1.4" fill="#fff" stroke="#626262" stroke-width="1"/><rect x="1007.5" y="109.1" width="18" height="2.8" rx="1.4" fill="#fff" stroke="#626262" stroke-width="1"/><rect x="1007.5" y="113.6" width="18" height="2.8" rx="1.4" fill="#fff" stroke="#626262" stroke-width="1"/><rect x="1007.5" y="118.1" width="18" height="2.8" rx="1.4" fill="#fff" stroke="#626262" stroke-width="1"/><path d="M1034 111 h6 l-3 3.6 z" fill="#111"/><rect x="1047.800" y="101.800" width="20.500" height="19.500" rx="2" fill="#f6f6f6" stroke="#0a0a0a" stroke-width="1.600"/><path d="M1050.500 104.500 h15 M1057 108.500 h8.500 M1057 114.500 h8.500 M1050.500 118.500 h15 M1055 116.500 h10" stroke="#6c6c6c" stroke-width="1"/><path d="M1050 109 l2.600 -3.200 l2.600 3.200z M1050 113.500 l2.600 3.200 l2.600 -3.200z" fill="#4a3a7a"/><rect x="1080.500" y="101.500" width="21" height="20" rx="2" fill="#f4f4f4" stroke="#c2c2c2" stroke-width="1"/><path d="M1083.500 104.500 h15 M1083.500 106.500 h15 M1089 109.500 h9.500 M1089 111.500 h9.500 M1089 113.500 h9.500 M1083.500 116.500 h15 M1083.500 118.500 h15" stroke="#d6d6d6" stroke-width="1"/><path d="M1083.500 108 h5 l-2.500 3.200z M1083.500 115 h5 l-2.500 -3.200z" fill="#cfcfcf"/><path d="M1112.5 104 V123" stroke="#d2d2d2" stroke-width="1"/><path d="M1122.500 109 L1131 114.500 L1122.500 120 Z" fill="url(#ggreen)" stroke="#2c7a0c" stroke-width=".8" stroke-linejoin="round"/><rect x="1125.5" y="104.4" width="12" height="2.2" rx="1.1" fill="#fff" stroke="#626262" stroke-width="1"/><rect x="1134.5" y="109.4" width="7" height="2.2" rx="1.1" fill="#fff" stroke="#626262" stroke-width="1"/><rect x="1134.5" y="114.4" width="6" height="2.2" rx="1.1" fill="#fff" stroke="#626262" stroke-width="1"/><rect x="1134.5" y="119.4" width="8" height="2.2" rx="1.1" fill="#fff" stroke="#626262" stroke-width="1"/><rect x="1160.5" y="104.4" width="9" height="2.2" rx="1.1" fill="#fff" stroke="#626262" stroke-width="1"/><rect x="1153.5" y="109.4" width="7" height="2.2" rx="1.1" fill="#fff" stroke="#626262" stroke-width="1"/><rect x="1153.5" y="114.4" width="6" height="2.2" rx="1.1" fill="#fff" stroke="#626262" stroke-width="1"/><rect x="1153.5" y="119.4" width="8" height="2.2" rx="1.1" fill="#fff" stroke="#626262" stroke-width="1"/><path d="M1173 109 L1164.500 114.500 L1173 120 Z" fill="url(#gred)" stroke="#a00000" stroke-width=".8" stroke-linejoin="round"/></svg><div class="combo" style="left:13px;top:49px;width:138px">Базовый<div class="btn"></div></div><div class="combo" style="left:227px;top:49px;width:138px"><span style="letter-spacing:-.22px">Times New Roman</span><div class="btn"></div></div><div class="combo" style="left:375px;top:49px;width:58px">13<div class="btn"></div></div>
</div>
<div id="doc">
<div class="abs" style="left:8px;top:9px;width:7px;height:6px;border-left:2px solid #808080;border-bottom:2px solid #808080"></div>
<div class="abs" style="left:622px;top:4px;width:516px;height:15px;background:#efefef"></div><div class="abs" style="left:697px;top:3.5px;width:404.5px;height:15.5px;background:#fff"></div><div class="abs" style="left:1138px;top:4px;width:1px;height:15px;background:#d8d8d8"></div><svg style="left:0;top:0" width="1234" height="40" viewBox="0 134 1234 40"><g font-family="Liberation Sans, sans-serif" font-size="9.800" fill="#8d8a88"><text x="646.8" y="148.600" text-anchor="middle">2</text><text x="671.3" y="148.600" text-anchor="middle">1</text><text x="720.5" y="148.600" text-anchor="middle">1</text><text x="745.0" y="148.600" text-anchor="middle">2</text><text x="769.6" y="148.600" text-anchor="middle">3</text><text x="794.2" y="148.600" text-anchor="middle">4</text><text x="818.8" y="148.600" text-anchor="middle">5</text><text x="843.3" y="148.600" text-anchor="middle">6</text><text x="867.9" y="148.600" text-anchor="middle">7</text><text x="892.5" y="148.600" text-anchor="middle">8</text><text x="917.0" y="148.600" text-anchor="middle">9</text><text x="941.6" y="148.600" text-anchor="middle">10</text><text x="966.2" y="148.600" text-anchor="middle">11</text><text x="990.7" y="148.600" text-anchor="middle">12</text><text x="1015.3" y="148.600" text-anchor="middle">13</text><text x="1039.9" y="148.600" text-anchor="middle">14</text><text x="1064.5" y="148.600" text-anchor="middle">15</text><text x="1089.0" y="148.600" text-anchor="middle">16</text><text x="1113.6" y="148.600" text-anchor="middle">17</text><path d="M635.8 143 v4" stroke="#9a9a9a" stroke-width="1"/><path d="M660.3 143 v4" stroke="#9a9a9a" stroke-width="1"/><path d="M684.9 143 v4" stroke="#9a9a9a" stroke-width="1"/><path d="M709.5 143 v4" stroke="#9a9a9a" stroke-width="1"/><path d="M734.1 143 v4" stroke="#9a9a9a" stroke-width="1"/><path d="M758.6 143 v4" stroke="#9a9a9a" stroke-width="1"/><path d="M783.2 143 v4" stroke="#9a9a9a" stroke-width="1"/><path d="M807.8 143 v4" stroke="#9a9a9a" stroke-width="1"/><path d="M832.3 143 v4" stroke="#9a9a9a" stroke-width="1"/><path d="M856.9 143 v4" stroke="#9a9a9a" stroke-width="1"/><path d="M881.5 143 v4" stroke="#9a9a9a" stroke-width="1"/><path d="M906.0 143 v4" stroke="#9a9a9a" stroke-width="1"/><path d="M930.6 143 v4" stroke="#9a9a9a" stroke-width="1"/><path d="M955.2 143 v4" stroke="#9a9a9a" stroke-width="1"/><path d="M979.8 143 v4" stroke="#9a9a9a" stroke-width="1"/><path d="M1004.3 143 v4" stroke="#9a9a9a" stroke-width="1"/><path d="M1028.9 143 v4" stroke="#9a9a9a" stroke-width="1"/><path d="M1053.5 143 v4" stroke="#9a9a9a" stroke-width="1"/><path d="M1078.0 143 v4" stroke="#9a9a9a" stroke-width="1"/><path d="M1102.6 143 v4" stroke="#9a9a9a" stroke-width="1"/><path d="M1127.2 143 v4" stroke="#9a9a9a" stroke-width="1"/><path d="M727.5 150 v3 M725.5 153 h4" stroke="#777" stroke-width="1" fill="none"/><path d="M758.2 150 v3 M756.2 153 h4" stroke="#777" stroke-width="1" fill="none"/><path d="M788.9 150 v3 M786.9 153 h4" stroke="#777" stroke-width="1" fill="none"/><path d="M819.6 150 v3 M817.6 153 h4" stroke="#777" stroke-width="1" fill="none"/><path d="M850.3 150 v3 M848.3 153 h4" stroke="#777" stroke-width="1" fill="none"/><path d="M881.0 150 v3 M879.0 153 h4" stroke="#777" stroke-width="1" fill="none"/><path d="M911.7 150 v3 M909.7 153 h4" stroke="#777" stroke-width="1" fill="none"/><path d="M942.4 150 v3 M940.4 153 h4" stroke="#777" stroke-width="1" fill="none"/><path d="M973.1 150 v3 M971.1 153 h4" stroke="#777" stroke-width="1" fill="none"/><path d="M1003.8 150 v3 M1001.8 153 h4" stroke="#777" stroke-width="1" fill="none"/><path d="M1034.5 150 v3 M1032.5 153 h4" stroke="#777" stroke-width="1" fill="none"/><path d="M1065.2 150 v3 M1063.2 153 h4" stroke="#777" stroke-width="1" fill="none"/><path d="M1095.9 150 v3 M1093.9 153 h4" stroke="#777" stroke-width="1" fill="none"/><path d="M692.500 138.500 H701.500 L697 144.500 Z" fill="#aaa7a4" stroke="#7c7a78" stroke-width=".8"/><path d="M692.500 152.500 H701.500 V150.500 L697 145.500 L692.500 150.500 Z" fill="#aaa7a4" stroke="#7c7a78" stroke-width=".8"/><path d="M1097 153 V151 L1101.500 146.500 L1106 151 V153 Z" fill="#aaa7a4" stroke="#7c7a78" stroke-width=".8"/></g></svg>
<div class="abs" style="left:622px;top:30px;width:516px;height:2px;background:repeating-linear-gradient(90deg,#3532b8 0 3.6px,transparent 3.6px 6.04px)"></div>
<div class="page" style="left:94px;top:36px;width:516px;height:731px"></div>
<div class="page" style="left:622px;top:36px;width:517px;height:731px"></div>
<div class="abs" style="left:168px;top:49px;width:1px;height:668px;background:#c3c3c3"></div>
<div class="abs" style="left:573px;top:49px;width:1px;height:668px;background:#c3c3c3"></div>
<div class="abs" style="left:168px;top:717px;width:406px;height:1px;background:#c3c3c3"></div>
<div class="abs" style="left:136px;top:49px;width:1px;height:88px;background:#c3c3c3"></div>
<div class="abs" style="left:136px;top:49px;width:438px;height:1px;background:#c3c3c3"></div>
<div class="abs" style="left:355px;top:50px;width:1px;height:87px;background:#111"></div>
<div class="abs" style="left:121px;top:136.7px;width:468px;height:1.6px;background:#0c0c0c"></div>
<div class="abs" style="left:121px;top:148.60000000000002px;width:468px;height:1.5px;background:#141414"></div>
<div class="abs" style="left:137px;top:144px;width:14px;height:1px;background:repeating-linear-gradient(90deg,#7cd0f6 0 1px,transparent 1px 2px)"></div>
<div class="abs" style="left:151px;top:143px;width:95px;height:1px;background:repeating-linear-gradient(90deg,#a9bdee 0 1.4px,transparent 1.4px 2.8px)"></div>
<div class="pm" style="left:245px;top:139px;font-size:6px;line-height:8px">¶</div>
<div class="pm" style="left:181px;top:149px">¶</div>
<div class="abs" style="left:168px;top:163px;width:406px;height:1px;background:#c3c3c3"></div>
<div class="abs" style="left:168px;top:175px;width:406px;height:1px;background:#c3c3c3"></div>
<div class="t3" style="left:169px;top:162px;">Исх.<i>·</i>№<i>·</i><i>·</i>122<i>·</i><i>·</i>от<i>·</i><i>·</i><i>·</i>22.06.2016<b class="p">¶</b></div>
<div class="fr" style="left:168px;top:176px;width:187px;height:104px"></div>
<div class="pm" style="left:169px;top:174.39999999999998px">¶</div>
<div class="pm" style="left:169px;top:187.39999999999998px">¶</div>
<div class="pm" style="left:169px;top:199.89999999999998px">¶</div>
<div class="pm" style="left:169px;top:212.89999999999998px">¶</div>
<div class="pm" style="left:169px;top:225.89999999999998px">¶</div>
<div class="pm" style="left:169px;top:244.89999999999998px">¶</div>
<div class="pm" style="left:169px;top:264.4px">¶</div>
<div class="fr" style="left:386px;top:176px;width:188px;height:104px;border-left:none"></div>
<div class="abs" style="left:386px;top:176px;width:1px;height:3px;background:#b0b0b0"></div>
<div class="abs" style="left:386px;top:189px;width:1px;height:6px;background:#b0b0b0"></div>
<div class="abs" style="left:386px;top:209px;width:1px;height:5px;background:#b0b0b0"></div>
<div class="abs" style="left:386px;top:228px;width:1px;height:5px;background:#b0b0b0"></div>
<div class="abs" style="left:386px;top:247px;width:1px;height:6px;background:#b0b0b0"></div>
<div class="abs" style="left:386px;top:267px;width:1px;height:12px;background:#b0b0b0"></div>
<div class="t1" style="left:387.5px;top:175.39999999999998px;">Руководителям<i>·</i><b class="p">¶</b></div>
<div class="t1" style="left:387.5px;top:195.09999999999997px;">органов<i>·</i>местного<i>·</i>самоуправления,<i>·</i></div>
<div class="t1" style="left:387.5px;top:214.39999999999998px;">осуществляющих<i>·</i>управление<i>·</i><b class="p">¶</b></div>
<div class="t1" style="left:387.5px;top:233.39999999999998px;">в<i>·</i>сфере<i>·</i>образования<i>·</i><b class="p">¶</b></div>
<div class="t1" style="left:387.5px;top:253.39999999999998px;">Республики<i>·</i><span class="sq">Башкортостан.</span><b class="p">¶</b></div>
<svg style="left:0;top:0" width="1234" height="812" viewBox="0 134 1234 812"><text x="166.3" y="187.7" font-family="Liberation Sans, sans-serif" font-size="5.5" fill="#000" textLength="165.5" lengthAdjust="spacingAndGlyphs">БАШКОРТОСТАН<tspan fill="#3d7fd6" stroke="none">·</tspan>РЕСПУБЛИКАНЫН</text><text x="333" y="187.7" font-family="Liberation Serif, serif" font-size="5.5" fill="#3d7fd6">¶</text><path d="M335.6 184.3 V188.29999999999998" stroke="#a8d4f0" stroke-width=".8"/><path d="M165.5 189.4 H245" stroke="#e8141c" stroke-width="1.3"/><path d="M248.5 189.4 H332" stroke="#e8141c" stroke-width="1.3"/><text x="186.7" y="194.8" font-family="Liberation Sans, sans-serif" font-size="5.5" fill="#000" textLength="120.3" lengthAdjust="spacingAndGlyphs">МЕГАРИФ<tspan fill="#3d7fd6" stroke="none">·</tspan>МИНИСТРЛЫҒЫ</text><text x="309" y="194.8" font-family="Liberation Serif, serif" font-size="5.5" fill="#3d7fd6">¶</text><path d="M311.6 191.4 V195.4" stroke="#a8d4f0" stroke-width=".8"/><path d="M185 196.5 H231" stroke="#e8141c" stroke-width="1.3"/><path d="M233.5 196.5 H308" stroke="#e8141c" stroke-width="1.3"/><text x="248.500" y="199.500" font-family="Liberation Serif, serif" font-size="3.500" fill="#3d7fd6">¶</text><text x="216.3" y="207.1" font-family="Liberation Sans, sans-serif" font-size="5.5" font-weight="bold" stroke="#000" stroke-width=".28" fill="#000" textLength="59.0" lengthAdjust="spacingAndGlyphs">БОРО-<tspan fill="#3d7fd6" stroke="none">·</tspan>ЗОНА</text><text x="278.5" y="207.1" font-family="Liberation Serif, serif" font-size="5.5" fill="#3d7fd6">¶</text><path d="M281.1 203.7 V207.7" stroke="#a8d4f0" stroke-width=".8"/><path d="M215 208.6 H244" stroke="#e8141c" stroke-width="1.3"/><text x="183.6" y="214.2" font-family="Liberation Sans, sans-serif" font-size="5.5" font-weight="bold" stroke="#000" stroke-width=".28" fill="#000" textLength="124.0" lengthAdjust="spacingAndGlyphs">ПСИХОЛОГИК-МЕДИЦИНА-</text><text x="311" y="214.2" font-family="Liberation Serif, serif" font-size="5.5" fill="#3d7fd6">¶</text><path d="M313.6 210.8 V214.79999999999998" stroke="#a8d4f0" stroke-width=".8"/><path d="M182 215.7 H305" stroke="#e8141c" stroke-width="1.3"/><text x="183.6" y="221.9" font-family="Liberation Sans, sans-serif" font-size="5.5" font-weight="bold" stroke="#000" stroke-width=".28" fill="#000" textLength="125.4" lengthAdjust="spacingAndGlyphs">ПЕДАГОГИК<tspan fill="#3d7fd6" stroke="none">·</tspan>КОМИССИЯНЫ</text><text x="313" y="221.9" font-family="Liberation Serif, serif" font-size="5.5" fill="#3d7fd6">¶</text><path d="M315.6 218.5 V222.5" stroke="#a8d4f0" stroke-width=".8"/><path d="M182 223.4 H239" stroke="#e8141c" stroke-width="1.3"/><path d="M241 223.4 H309" stroke="#e8141c" stroke-width="1.3"/><text x="202" y="228.8" font-family="Liberation Sans, sans-serif" font-size="5.5" font-weight="bold" stroke="#000" stroke-width=".28" fill="#000" textLength="90.5" lengthAdjust="spacingAndGlyphs">ДЕҮЛЕТ<tspan fill="#3d7fd6" stroke="none">·</tspan>БЮДЖЕТ<tspan fill="#3d7fd6" stroke="none">·</tspan><tspan fill="#3d7fd6" stroke="none">·</tspan></text><text x="295" y="228.8" font-family="Liberation Serif, serif" font-size="5.5" fill="#3d7fd6">¶</text><path d="M297.6 225.4 V229.4" stroke="#a8d4f0" stroke-width=".8"/><path d="M200.5 230.3 H240" stroke="#e8141c" stroke-width="1.3"/><text x="205.7" y="235.8" font-family="Liberation Sans, sans-serif" font-size="5.5" font-weight="bold" stroke="#000" stroke-width=".28" fill="#000" textLength="80.3" lengthAdjust="spacingAndGlyphs">УЧРЕЖДЕНИЕНЫ</text><text x="289.5" y="235.8" font-family="Liberation Serif, serif" font-size="5.5" fill="#3d7fd6">¶</text><path d="M292.1 232.4 V236.4" stroke="#a8d4f0" stroke-width=".8"/><path d="M204 237.4 H286" stroke="#e8141c" stroke-width="1.3"/><text x="191" y="248.5" font-family="Liberation Serif, serif" font-size="5.2" fill="#222" textLength="110.5" lengthAdjust="spacingAndGlyphs">452450,<tspan fill="#3d7fd6" stroke="none">·</tspan>Боро,<tspan fill="#3d7fd6" stroke="none">·</tspan>Тыныслык<tspan fill="#3d7fd6" stroke="none">·</tspan>урамы,<tspan fill="#3d7fd6" stroke="none">·</tspan>34</text><text x="302.5" y="248.5" font-family="Liberation Serif, serif" font-size="5.2" fill="#3d7fd6">¶</text><path d="M305.1 245.3 V249.1" stroke="#a8d4f0" stroke-width=".8"/><path d="M215 249.9 H231" stroke="#e8141c" stroke-width="1.3"/><path d="M234 249.9 H268" stroke="#e8141c" stroke-width="1.3"/><path d="M269.5 249.9 H290" stroke="#e8141c" stroke-width="1.3"/><text x="220.2" y="256.7" font-family="Liberation Serif, serif" font-size="5.2" fill="#222" textLength="53.3" lengthAdjust="spacingAndGlyphs">Тел./факс<tspan fill="#3d7fd6" stroke="none">·</tspan>3-17-72,</text><text x="274" y="256.7" font-family="Liberation Serif, serif" font-size="5.2" fill="#3d7fd6">¶</text><path d="M276.6 253.5 V257.3" stroke="#a8d4f0" stroke-width=".8"/><text x="207" y="264.9" font-family="Liberation Serif, serif" font-size="5.2" fill="#222" textLength="79.0" lengthAdjust="spacingAndGlyphs">E-<tspan fill="#3d7fd6" stroke="none">·</tspan>mail:<tspan fill="#3d7fd6" stroke="none">·</tspan>birskpmpk@mail.ru</text><text x="287" y="264.9" font-family="Liberation Serif, serif" font-size="5.2" fill="#3d7fd6">¶</text><path d="M289.6 261.7 V265.5" stroke="#a8d4f0" stroke-width=".8"/><path d="M230 266.6 H286" stroke="#e8141c" stroke-width="1" stroke-dasharray="2 1.200"/><text x="142" y="241.500" font-family="Liberation Serif, serif" font-size="3.500" fill="#3d7fd6">¶</text><rect x="142.500" y="265.500" width=".8" height=".8" fill="#3d7fd6"/><text x="384.8" y="188.2" font-family="Liberation Serif, serif" font-size="5.7" fill="#222" textLength="160.2" lengthAdjust="spacingAndGlyphs">МИНИСТЕРСТВО<tspan fill="#3d7fd6" stroke="none">·</tspan>ОБРАЗОВАНИЯ</text><text x="546.5" y="188.2" font-family="Liberation Serif, serif" font-size="5.7" fill="#3d7fd6">¶</text><path d="M549.1 184.7 V188.79999999999998" stroke="#a8d4f0" stroke-width=".8"/><text x="388" y="196.2" font-family="Liberation Serif, serif" font-size="5.7" fill="#222" textLength="155.0" lengthAdjust="spacingAndGlyphs">РЕСПУБЛИКИ<tspan fill="#3d7fd6" stroke="none">·</tspan>БАШКОРТОСТАН</text><text x="544.5" y="196.2" font-family="Liberation Serif, serif" font-size="5.7" fill="#3d7fd6">¶</text><path d="M547.1 192.7 V196.79999999999998" stroke="#a8d4f0" stroke-width=".8"/><path d="M457 198.2 H543" stroke="#e8141c" stroke-width="1" stroke-dasharray="2 1.200"/><text x="360" y="201" font-family="Liberation Serif, serif" font-size="3.500" fill="#3d7fd6">¶</text><text x="417.5" y="207.2" font-family="Liberation Sans, sans-serif" font-size="5.5" font-weight="bold" stroke="#000" stroke-width=".28" fill="#000" textLength="95.5" lengthAdjust="spacingAndGlyphs">ГОСУДАРСТВЕННОЕ-<tspan fill="#3d7fd6" stroke="none">·</tspan></text><text x="515" y="207.2" font-family="Liberation Serif, serif" font-size="5.5" fill="#3d7fd6">¶</text><path d="M517.6 203.8 V207.79999999999998" stroke="#a8d4f0" stroke-width=".8"/><text x="399.6" y="215" font-family="Liberation Sans, sans-serif" font-size="5.5" font-weight="bold" stroke="#000" stroke-width=".28" fill="#000" textLength="129.7" lengthAdjust="spacingAndGlyphs">БЮДЖЕТНОЕ<tspan fill="#3d7fd6" stroke="none">·</tspan>УЧРЕЖДЕНИЕ</text><text x="533" y="215" font-family="Liberation Serif, serif" font-size="5.5" fill="#3d7fd6">¶</text><path d="M535.6 211.6 V215.6" stroke="#a8d4f0" stroke-width=".8"/><text x="412.2" y="222" font-family="Liberation Sans, sans-serif" font-size="5.5" font-weight="bold" stroke="#000" stroke-width=".28" fill="#000" textLength="105.8" lengthAdjust="spacingAndGlyphs">БИРСКАЯ<tspan fill="#3d7fd6" stroke="none">·</tspan>ЗОНАЛЬНАЯ-<tspan fill="#3d7fd6" stroke="none">·</tspan></text><text x="520" y="222" font-family="Liberation Serif, serif" font-size="5.5" fill="#3d7fd6">¶</text><path d="M522.6 218.6 V222.6" stroke="#a8d4f0" stroke-width=".8"/><path d="M411 223.4 H455" stroke="#e8141c" stroke-width="1.3"/><text x="413.3" y="228.9" font-family="Liberation Sans, sans-serif" font-size="5.5" font-weight="bold" stroke="#000" stroke-width=".28" fill="#000" textLength="103.7" lengthAdjust="spacingAndGlyphs">ПСИХОЛОГО-МЕДИКО-<tspan fill="#3d7fd6" stroke="none">·</tspan></text><text x="520" y="228.9" font-family="Liberation Serif, serif" font-size="5.5" fill="#3d7fd6">¶</text><path d="M522.6 225.5 V229.5" stroke="#a8d4f0" stroke-width=".8"/><path d="M412 230.4 H513" stroke="#e8141c" stroke-width="1.3"/><text x="395" y="235.7" font-family="Liberation Sans, sans-serif" font-size="5.5" font-weight="bold" stroke="#000" stroke-width=".28" fill="#000" textLength="140.2" lengthAdjust="spacingAndGlyphs">ПЕДАГОГИЧЕСКАЯ<tspan fill="#3d7fd6" stroke="none">·</tspan>КОМИССИЯ</text><text x="538" y="235.7" font-family="Liberation Serif, serif" font-size="5.5" fill="#3d7fd6">¶</text><path d="M540.6 232.3 V236.29999999999998" stroke="#a8d4f0" stroke-width=".8"/><text x="360" y="241.500" font-family="Liberation Serif, serif" font-size="3.500" fill="#3d7fd6">¶</text><text x="423.8" y="248.8" font-family="Liberation Serif, serif" font-size="5.2" fill="#222" textLength="82.2" lengthAdjust="spacingAndGlyphs">452450,<tspan fill="#3d7fd6" stroke="none">·</tspan>Бирск,<tspan fill="#3d7fd6" stroke="none">·</tspan>ул.<tspan fill="#3d7fd6" stroke="none">·</tspan>Мира,<tspan fill="#3d7fd6" stroke="none">·</tspan>34</text><text x="506.5" y="248.8" font-family="Liberation Serif, serif" font-size="5.2" fill="#3d7fd6">¶</text><path d="M509.1 245.6 V249.4" stroke="#a8d4f0" stroke-width=".8"/><path d="M447 250.6 H465" stroke="#e8141c" stroke-width="1" stroke-dasharray="2 1.200"/><text x="438.2" y="257.2" font-family="Liberation Serif, serif" font-size="5.2" fill="#222" textLength="53.6" lengthAdjust="spacingAndGlyphs">Тел./факс<tspan fill="#3d7fd6" stroke="none">·</tspan>3-17-72,</text><text x="492.5" y="257.2" font-family="Liberation Serif, serif" font-size="5.2" fill="#3d7fd6">¶</text><path d="M495.1 254.0 V257.8" stroke="#a8d4f0" stroke-width=".8"/><text x="426.4" y="264.8" font-family="Liberation Serif, serif" font-size="5.2" fill="#222" textLength="21.1" lengthAdjust="spacingAndGlyphs">E-mail:<tspan fill="#3d7fd6" stroke="none">·</tspan></text><text x="448" y="264.8" font-family="Liberation Serif, serif" font-size="5.2" fill="#1a1ae0" textLength="57.0" lengthAdjust="spacingAndGlyphs">birskpmpk@mail.ru</text><text x="505.5" y="264.8" font-family="Liberation Serif, serif" font-size="5.2" fill="#3d7fd6">¶</text><path d="M508.1 261.6 V265.40000000000003" stroke="#a8d4f0" stroke-width=".8"/><path d="M448 266 H505" stroke="#1a1ae0" stroke-width="0.8"/><path d="M447 267.4 H504" stroke="#e8141c" stroke-width="1" stroke-dasharray="2 1.200"/></svg>
<div class="fr" style="left:696px;top:85px;width:406px;height:633px"></div>
<div class="pm" style="left:697px;top:85px">¶</div>
<div class="pm" style="left:822px;top:96.5px;font-family:'DejaVu Sans',sans-serif;font-size:8px;text-shadow:none;background:none;-webkit-text-fill-color:#3585dc">➔</div>
<div class="pm" style="left:930px;top:96.80000000000001px">¶</div>
<div class="pm" style="left:721px;top:116.4px">¶</div>
<div class="t2 jl" style="left:721.3px;top:135.8px;width:380.2px"><span class="sq">ГБУ</span><i>·</i><span class="sq">Бирская</span><i>·</i><span class="sq">ПМПК</span><i>·</i><span>просит</span><i>·</i><span>предоставить</span><i>·</i><span>информацию</span><i>·</i><span>до</span><i>·</i><span>25.06.16г.</span><i>·</i><span>по</span></div>
<div class="t2 jl" style="left:697px;top:155.3px;width:404.5px"><span>запросу</span><i>·</i><span>Администрации</span><i>·</i><span>Президента</span><i>·</i><span>Российской</span><i>·</i><span>Федерации</span><i>·</i><span>от</span><i>·</i><span>15.06.2016</span><i>·</i><span class="sq">г.</span></div>
<div class="t2 jl" style="left:697px;top:174.8px;width:404.5px"><span>№</span><i>·</i><span>А53-1/1872</span><i>·</i><span>во</span><i>·</i><span>исполнение</span><i>·</i><span>№</span><i>·</i><span>Пр-15ГС,</span><i>·</i><span>пункт</span><i>·</i><span>3,</span><i>·</i><span>от</span><i>·</i><span>2</span><i>·</i><span>января</span><i>·</i><span>2016</span><i>·</i><span class="sq">г..</span></div>
<div class="t2 jl" style="left:697px;top:194.10000000000002px;width:404.5px"><span>Информацию</span><i>·</i><span>необходимо</span><i>·</i><span>предоставить</span><i>·</i><span>по</span><i>·</i><span>запрашиваемым</span><i>·</i><span>формам</span><i>·</i><span>и</span><i>·</i><span>перечню</span></div>
<div class="t2" style="left:697px;top:212.60000000000002px;">вопросов<i>·</i>(Таблица<i>·</i>1.1,<i>·</i>1.2,<i>·</i>1.3.,2.1,<i>·</i>3.1.).<b class="p">¶</b></div>
<div class="pm" style="left:721px;top:232.39999999999998px">¶</div>
<div class="pm" style="left:721px;top:251.39999999999998px">¶</div>
<div class="pm" style="left:697px;top:271.4px">¶</div>
<div class="pm" style="left:697px;top:284.4px">¶</div>
<div class="pm" style="left:697px;top:297.4px">¶</div>
<div class="t2" style="left:697px;top:310.90000000000003px;">Заведующий<i>·</i><span class="sq">ГБУ</span><i>·</i><span class="sq">Бирская</span><i>·</i><span class="sq">ПМПК</span></div>
<div class="abs" style="left:860px;top:318px;width:168px;height:1px;background:repeating-linear-gradient(90deg,#6fa8e4 0 1px,transparent 1px 2px)"></div>
<div class="t2" style="left:1029px;top:310.90000000000003px;"><span class="sq">М.Н.</span><i>·</i><span class="sq">Денисова</span><b class="p">¶</b></div>
<div class="abs" style="left:1100px;top:311px;width:1.5px;height:14px;background:#000"></div>
</div>
<div id="side"><div class="abs" style="left:0;top:0;width:7px;height:812px;background:#f5f5f5;border-left:1px solid #d0cecc;border-right:1px solid #b4b4b4"></div><div class="abs" style="left:0;top:369px;width:7px;height:73px;background:#8c8c8c"></div><div class="abs" style="left:1px;top:402px;width:0;height:0;border-top:3.500px solid transparent;border-bottom:3.500px solid transparent;border-left:5px solid #f4f4f4"></div><svg style="left:0;top:0" width="47" height="812" viewBox="1233 134 47 812"><defs><radialGradient id="ginfo" cx=".5" cy=".25" r=".8"><stop offset="0" stop-color="#6fb4f4"/><stop offset=".6" stop-color="#2272d0"/><stop offset="1" stop-color="#1458b0"/></radialGradient></defs><path d="M1255 150.500 h6 M1255 152.500 h6 M1255 154.500 h6" stroke="#1d2a4a" stroke-width="1"/><path d="M1258.500 156.500 h6 l-3 3z" fill="#1d2a4a"/><path d="M1249 173.500 H1271" stroke="#dcdcdc" stroke-width="1"/><rect x="1244.500" y="177.500" width="31" height="31" rx="3" fill="#f4f4f4" stroke="#bdbdbd"/><circle cx="1260" cy="193" r="10" fill="url(#ginfo)" stroke="#1c5db0" stroke-width=".6"/><text x="1260" y="199" text-anchor="middle" font-family="Liberation Serif, serif" font-weight="bold" font-size="17" fill="#fff">i</text><text x="1257" y="234" text-anchor="middle" font-family="Liberation Serif, serif" font-weight="bold" font-size="25" fill="#d40000" textLength="18" lengthAdjust="spacingAndGlyphs">T</text><text x="1261.500" y="238" text-anchor="middle" font-family="Liberation Serif, serif" font-weight="bold" font-size="25" fill="#000" textLength="18" lengthAdjust="spacingAndGlyphs">T</text><rect x="1251.500" y="252.500" width="17" height="14" fill="#fff" stroke="#9db6d6"/><rect x="1253" y="254" width="14" height="11" fill="#3a7fd8"/><ellipse cx="1260" cy="258.500" rx="5" ry="4.500" fill="#c4306a"/><ellipse cx="1262.500" cy="257.500" rx="2.200" ry="3" fill="#f0c020"/><ellipse cx="1257" cy="258" rx="1.800" ry="3" fill="#7a2a90"/><path d="M1249.500 258 h2 v7 h17 v-7 h2 v15 q0 1 -1 1 h-19 q-1 0 -1 -1z" fill="#5b95d8" stroke="#3f78c0" stroke-width=".8"/><path d="M1250 267.500 h20" stroke="#a9cbf0" stroke-width="1.600"/><circle cx="1260" cy="298" r="10" fill="#fff" stroke="#4a88cc" stroke-width="2.400"/><g fill="#fff" stroke="#666" stroke-width=".7"><path d="M1260 291 l2 3 h-4z"/><path d="M1260 305 l2 -3 h-4z"/><path d="M1253 298 l3 -2 v4z"/><path d="M1267 298 l-3 -2 v4z"/><rect x="1258.500" y="296.500" width="3" height="3"/></g></svg></div>
<div class="abs" style="left:0;top:946px;width:1233px;height:1px;background:#aeaba8;z-index:3"></div><div id="status"><span style="left:10px">Страница 2 из 2</span><span style="left:199px">0 слов, 0 символов</span><span style="left:404px">Converted1</span><span style="left:594px">Русский</span><span style="left:1235px;color:#3b4655">65 %</span><svg style="left:0;top:-1px" width="1280" height="22" viewBox="0 946 1280 22"><rect x="764" y="954.500" width="6" height="5" fill="#7a7a7a"/><path d="M771.500 953 v8 M770 953 h3 M770 961 h3" stroke="#7a7a7a" stroke-width="1"/><path d="M793.500 952.500 h7 l1.500 1.500 v8.500 h-8.500 z" fill="none" stroke="#9a9a9a" stroke-width="1"/><path d="M795.500 957.500 l1.500 2 l3 -4" stroke="#9a9a9a" fill="none" stroke-width="1"/><path d="M1016.500 952.500 h4.0 l2.500 2.500 v6.500 h-6.5 z" fill="#fff" stroke="#7a7a7a" stroke-width="1"/><path d="M1032.500 952.500 h4.0 l2.500 2.500 v6.500 h-6.5 z" fill="#fff" stroke="#7a7a7a" stroke-width="1"/><path d="M1040.500 952.500 h4.0 l2.500 2.500 v6.500 h-6.5 z" fill="#fff" stroke="#7a7a7a" stroke-width="1"/><path d="M1055.500 953.500 h6 l1.500 -1 l1.500 1 h6 v8 h-6 l-1.500 -1 l-1.500 1 h-6 z M1063 952.500 v9" fill="#fff" stroke="#7a7a7a" stroke-width="1"/><path d="M1090 957.500 h7" stroke="#747474" stroke-width="2"/><path d="M1105 957.500 H1201" stroke="#a6a6a6" stroke-width="1.800"/><path d="M1153.500 953 v9" stroke="#9a9a9a" stroke-width="1.800"/><circle cx="1132" cy="957.500" r="4.200" fill="#fff" stroke="#6e6e6e" stroke-width="1.300"/><path d="M1207.500 957.500 h8 M1211.500 953.500 v8" stroke="#747474" stroke-width="2"/></svg></div>
<div id="task"><svg style="left:0;top:0" width="1280" height="56" viewBox="0 968 1280 56"><defs><linearGradient id="wp" x1="0" y1="0" x2="1" y2="0"><stop offset="0.0000" stop-color="#2f49a8"/><stop offset="0.1406" stop-color="#2b429e"/><stop offset="0.1562" stop-color="#1a2868"/><stop offset="0.1688" stop-color="#070a18"/><stop offset="0.3125" stop-color="#060814"/><stop offset="0.3633" stop-color="#0a0f2c"/><stop offset="0.3766" stop-color="#1c2a7a"/><stop offset="0.5000" stop-color="#1a2672"/><stop offset="0.5469" stop-color="#141e62"/><stop offset="0.6344" stop-color="#121a58"/><stop offset="0.6484" stop-color="#0a0c24"/><stop offset="0.6656" stop-color="#2a3066"/><stop offset="0.7031" stop-color="#3e4476"/><stop offset="0.7344" stop-color="#6a6490"/><stop offset="0.7695" stop-color="#8a7fa0"/><stop offset="0.7930" stop-color="#6a6894"/><stop offset="0.8281" stop-color="#575a8e"/><stop offset="0.8984" stop-color="#50548a"/><stop offset="1.0000" stop-color="#4a4e84"/></linearGradient><linearGradient id="pd" x1="0" y1="0" x2="0" y2="1"><stop offset="0" stop-color="#7a8aa4"/><stop offset="1" stop-color="#70809c"/></linearGradient><radialGradient id="hl" cx=".5" cy=".5" r=".5"><stop offset="0" stop-color="#fff" stop-opacity=".85"/><stop offset=".5" stop-color="#fff" stop-opacity=".35"/><stop offset="1" stop-color="#fff" stop-opacity="0"/></radialGradient><filter id="bl1" x="-5%" y="-20%" width="110%" height="140%"><feGaussianBlur stdDeviation=".7"/></filter><filter id="bl2" x="-5%" y="-50%" width="110%" height="200%"><feGaussianBlur stdDeviation="2"/></filter><radialGradient id="orb" cx=".5" cy=".5" r=".5"><stop offset="0" stop-color="#5f93c4"/><stop offset=".55" stop-color="#3f74ab"/><stop offset=".8" stop-color="#1d4a80"/><stop offset=".93" stop-color="#173e70"/><stop offset="1" stop-color="#2f5f92"/></radialGradient><linearGradient id="drop" x1="1" y1="0" x2="0" y2="1"><stop offset="0" stop-color="#c4d6e8"/><stop offset=".4" stop-color="#f4f7fb"/><stop offset="1" stop-color="#dfe8f1"/></linearGradient><linearGradient id="fold" x1="0" y1="0" x2="0" y2="1"><stop offset="0" stop-color="#5c9de2"/><stop offset="1" stop-color="#8fc6f8"/></linearGradient><linearGradient id="base" x1="0" y1="0" x2="0" y2="1"><stop offset="0" stop-color="#f0f0f0"/><stop offset=".6" stop-color="#cfcfcf"/><stop offset="1" stop-color="#a8a8a8"/></linearGradient><linearGradient id="wr" x1="0" y1="0" x2="0" y2="1"><stop offset="0" stop-color="#80bdf7"/><stop offset="1" stop-color="#5fa2e6"/></linearGradient><linearGradient id="ca" x1="0" y1="0" x2="0" y2="1"><stop offset="0" stop-color="#a9d75c"/><stop offset="1" stop-color="#8cc23c"/></linearGradient><radialGradient id="globe" cx=".45" cy=".3" r=".8"><stop offset="0" stop-color="#4ab0f0"/><stop offset=".5" stop-color="#1f6fd0"/><stop offset="1" stop-color="#143a90"/></radialGradient><linearGradient id="fox" x1=".8" y1="0" x2=".2" y2="1"><stop offset="0" stop-color="#ffc226"/><stop offset=".35" stop-color="#f88a18"/><stop offset="1" stop-color="#e8501a"/></linearGradient><linearGradient id="tfr" x1="0" y1="0" x2="0" y2="1"><stop offset="0" stop-color="#e4e4e4"/><stop offset=".85" stop-color="#c4c4c4"/><stop offset="1" stop-color="#9a9a9a"/></linearGradient><radialGradient id="gear" cx=".4" cy=".35" r=".8"><stop offset="0" stop-color="#f2f2f2"/><stop offset="1" stop-color="#a2a2a2"/></radialGradient><linearGradient id="trash" x1="0" y1="0" x2="1" y2="0"><stop offset="0" stop-color="#a8a8a8"/><stop offset=".3" stop-color="#f4f4f4"/><stop offset=".6" stop-color="#c4c4c4"/><stop offset="1" stop-color="#8c8c8c"/></linearGradient><pattern id="mesh" width="3" height="3" patternUnits="userSpaceOnUse"><circle cx="1.500" cy="1.500" r=".9" fill="#3a3a3a"/></pattern><radialGradient id="lockg" cx=".5" cy=".25" r=".85"><stop offset="0" stop-color="#ffc06a"/><stop offset=".6" stop-color="#f08a1c"/><stop offset="1" stop-color="#d86a08"/></radialGradient><radialGradient id="powg" cx=".5" cy=".25" r=".85"><stop offset="0" stop-color="#f0605a"/><stop offset=".6" stop-color="#d02a24"/><stop offset="1" stop-color="#a81610"/></radialGradient></defs><rect x="0" y="968" width="1280" height="16" fill="url(#wp)"/><g filter="url(#bl2)"><ellipse cx="200" cy="972" rx="14" ry="5" fill="#0a1030"/><ellipse cx="250" cy="978" rx="18" ry="4" fill="#16225a"/><ellipse cx="310" cy="972" rx="16" ry="3" fill="#141e50"/><ellipse cx="440" cy="976" rx="26" ry="4" fill="#1a2868"/><ellipse cx="680" cy="975" rx="20" ry="5" fill="#121a58"/><rect x="836" y="968" width="13" height="16" fill="#05060f"/><rect x="818" y="968" width="8" height="12" fill="#0a0c20"/><rect x="928" y="968" width="9" height="16" fill="#0c0c1c"/></g><rect x="0" y="984" width="1280" height="40" fill="#a3aeb6"/><path d="M0 1001.500 C80 1004 160 1007 230 1010 C300 1013 360 1014.500 410 1013.500 C480 1012 560 1007 640 1003 C700 1000 740 996 780 996 C830 996 860 999 900 1000 C960 1001.500 1010 999 1060 1000.500 C1140 1003 1220 1006 1280 1008 V1024 H0 Z" fill="url(#pd)" filter="url(#bl1)"/><circle cx="27" cy="995.800" r="23" fill="url(#orb)"/><ellipse cx="27" cy="977.500" rx="11" ry="5" fill="url(#hl)"/><ellipse cx="27" cy="1015.500" rx="12" ry="4" fill="url(#hl)"/><path d="M37.500 984 C38.500 990 39 996 37.500 1002 A11.500 11.500 0 1 1 22 988.500 C27 986.500 32 985.500 37.500 984 Z" fill="url(#drop)"/><rect x="70" y="975" width="31" height="16" fill="#8cc858"/><rect x="70" y="976.500" width="32" height="16" fill="#f4f4f4"/><path d="M80 980 h18 M80 983 h14" stroke="#c8c8c8" stroke-width="1"/><rect x="66" y="986" width="22" height="8" fill="#f0f0f0"/><path d="M68 978.500 L78 976 L80.500 985.500 L70 987.500 Z" fill="#f2c62e"/><path d="M71.500 977.500 v7 M73 981 h3" stroke="#3f8fd0" stroke-width="1"/><rect x="88" y="980" width="15.500" height="12" fill="#8a5a2a"/><rect x="90.500" y="981.500" width="10.500" height="7.500" fill="#7ab4f0"/><rect x="90.500" y="990" width="10.500" height="2" fill="#7ab4f0"/><path d="M63.500 991.500 Q63.500 989.500 65.500 989.500 H81 L83 992 H105 Q107 992 107 994 L105.500 1014 H65 Z" fill="url(#fold)"/><rect x="64" y="1012.500" width="42.500" height="5.500" rx="2" fill="url(#base)"/><rect x="66.500" y="1010.500" width="6" height="3" fill="none" stroke="#e4e4e4" stroke-width="1"/><rect x="98" y="1010.500" width="6" height="3" fill="none" stroke="#e4e4e4" stroke-width="1"/><ellipse cx="85" cy="1019.500" rx="14" ry="1" fill="#9fe8ff" opacity=".7"/><rect x="127.4" y="975" width="29.400000000000006" height="3" fill="#d4d4d4"/><rect x="122.4" y="977" width="39.400000000000006" height="41.300" rx="2.500" fill="url(#wr)"/><path d="M128.4 1018.300 L130.9 1013.500 H153.3 L155.8 1018.300 Z" fill="url(#base)"/><ellipse cx="142.10000000000002" cy="1019.600" rx="13" ry="1" fill="#9fe8ff" opacity=".7"/><g fill="none" stroke="#fff" stroke-width="1.500" stroke-linejoin="round"><path d="M136.500 993.500 L148 982.500 Q150 981 152 983 L154 985 Q155.500 987 154 988.500 L143 1000 L135 1002 Z"/><path d="M145.500 985 L151.500 991"/></g><path d="M135 1002 l1.200 -4 l3 3z" fill="#fff"/><path d="M129.500 1005.500 H155.500 M129.500 1008.700 H146.500" stroke="#fff" stroke-width="1.400"/><rect x="184" y="975" width="30.30000000000001" height="3" fill="#d4d4d4"/><rect x="179" y="977" width="40.30000000000001" height="41.300" rx="2.500" fill="url(#ca)"/><path d="M185 1018.300 L187.5 1013.500 H210.8 L213.3 1018.300 Z" fill="url(#base)"/><text x="199.500" y="1001.500" text-anchor="middle" font-family="Liberation Serif, DejaVu Serif, serif" font-size="27" fill="#fff" stroke="#fff" stroke-width=".7" textLength="16" lengthAdjust="spacingAndGlyphs">Σ</text><path d="M186.500 1005.500 h7 M195.500 1005.500 h8 M205.500 1005.500 h7 M186.500 1008.700 h7 M195.500 1008.700 h8 M205.500 1008.700 h7" stroke="#fff" stroke-width="1.400"/><circle cx="256.500" cy="995" r="16.500" fill="url(#globe)"/><path d="M240 984 C236 990 234 998 237 1005 C241 1013.500 250 1017.500 259 1016.500 C269 1015.500 276.500 1007.500 276.500 997 C276.500 991 274.500 986.500 272 983.500 C273 987 273 990 272 992 C271 988 269 985 266 983 C268 987 268.500 990.500 268 993 C270 999 267.500 1005.500 261 1007.500 C255 1009 250.500 1006 249.500 1003 C252 1004 255 1003.500 257 1002 C254 1002 251 1000 250.500 997 C251 994.500 254 994 256.500 995 C256 992.500 253 990 249 990.500 C248 988 249 985 251.500 983 C247 983 243.500 985.500 242 989 C240.500 988 240 986 240 984 Z" fill="url(#fox)"/><path d="M266 983 C271 987 274.500 992 275 999 C275.500 1006 271 1012.500 265 1015 C271 1010 272 1003 270.500 997.500 C269.500 992 268.500 987 266 983 Z" fill="#ffd23a" opacity=".85"/><rect x="291.400" y="979.200" width="43" height="38" rx="2" fill="url(#tfr)"/><rect x="294" y="983" width="38" height="30.500" fill="#2d3135"/><path d="M294 983 H332 V996 C318 998.500 306 999 294 997.500 Z" fill="#596469" opacity=".8"/><path d="M298.500 989.500 L303.500 992.500 L298.500 995.500" fill="none" stroke="#fff" stroke-width="1.400"/><path d="M305.500 996 H312" stroke="#fff" stroke-width="1.400"/><ellipse cx="313" cy="1019.400" rx="14" ry="1" fill="#9fe8ff" opacity=".7"/><path d="M346.3 990 h4 l.6 4.500 h-5.200z M345.40000000000003 999 h6 l.8 8 h-7.600z M344.40000000000003 1012 h8 l.8 8 h-9.600z" fill="#c3cad0" opacity=".85"/><path d="M795.0 990 h4 l.6 4.500 h-5.200z M794.1 999 h6 l.8 8 h-7.600z M793.1 1012 h8 l.8 8 h-9.600z" fill="#c3cad0" opacity=".85"/><path d="M364 975 H387.500 L397.400 985 V1014.500 Q397.400 1016.700 395.400 1016.700 H365 Q362.800 1016.700 362.800 1014.500 V977 Q362.800 975 365 975 Z" fill="#fbfbfb" stroke="#185a8c" stroke-width="2.200" stroke-linejoin="round"/><path d="M388.500 974 H398.400 V984 Z" fill="#1c78b8"/><path d="M369 991.500 h7 M369 995.500 h7 M369 999.500 h7 M369 1003.500 h22 M369 1007 h22 M369 1010.500 h16" stroke="#185a8c" stroke-width="1.800"/><rect x="378" y="990" width="13" height="10.500" fill="#6fb0e8"/><path d="M378 1000.500 L383 994 L386 997.500 L388 996 L391 1000.500 Z" fill="#4a4a4a"/><circle cx="389" cy="992" r="1.200" fill="#f4c020"/><ellipse cx="380" cy="1019.400" rx="12" ry="1" fill="#9fe8ff" opacity=".6"/><rect x="815" y="979" width="36.500" height="30" fill="#4a8fd8"/><rect x="811.600" y="975.300" width="43" height="4.800" rx="1.500" fill="url(#base)"/><rect x="812.500" y="980" width="5" height="2.500" fill="#cfcfcf"/><rect x="848.500" y="980" width="5" height="2.500" fill="#cfcfcf"/><path d="M811.600 1001 H818 C821 1010 846 1010 849 1001 H855 V1016 Q855 1017.700 853 1017.700 H813.600 Q811.600 1017.700 811.600 1016 Z" fill="url(#base)" stroke="#9a9a9a" stroke-width=".6"/><circle cx="829.500" cy="995.500" r="12" fill="none" stroke="#c9c9c9" stroke-width="3.200" stroke-dasharray="3.100 2.300"/><circle cx="829.500" cy="995.500" r="10.500" fill="url(#gear)" stroke="#8e8e8e" stroke-width=".6"/><circle cx="829.500" cy="995.500" r="5.500" fill="#b5b5b5" stroke="#8a8a8a" stroke-width=".8"/><circle cx="829.500" cy="995.500" r="2.200" fill="#e8e8e8" stroke="#777" stroke-width=".6"/><circle cx="844.500" cy="990" r="5" fill="none" stroke="#c9c9c9" stroke-width="2.400" stroke-dasharray="2 1.500"/><circle cx="844.500" cy="990" r="4.200" fill="#cdcdcd" stroke="#8e8e8e" stroke-width=".6"/><circle cx="844.500" cy="990" r="1.500" fill="#4a8fd8"/><path d="M868.500 985 L872.500 978.200 H891 L893.500 982 H911 Q913 982 913 984 V988 H868.500 Z" fill="#dfe3e6"/><rect x="866.500" y="984.500" width="47.500" height="32.500" rx="2" fill="url(#fold)"/><circle cx="890.500" cy="1000.500" r="12.500" fill="#4f86c6" opacity=".55"/><path d="M886.500 991 h8 v7 h4.500 l-8.500 8 l-8.500 -8 h4.500z" fill="#8ec0f2" opacity=".9"/><path d="M884 1008.500 h13" stroke="#8ec0f2" stroke-width="1.600"/><g fill="none" stroke="#6a7078" stroke-width="3.400" stroke-linecap="round" opacity=".8"><path d="M929.500 989.500 L938 1001 M940 989.500 L931.500 1001"/></g><g fill="none" stroke="#fff" stroke-width="2.200" stroke-linecap="round"><path d="M929.500 989.500 L938 1001 M940 989.500 L931.500 1001"/><ellipse cx="930.800" cy="1003" rx="2.300" ry="2.800"/><ellipse cx="938.800" cy="1003" rx="2.300" ry="2.800"/></g><rect x="952" y="989.700" width="21.200" height="14.300" fill="#fff"/><rect x="952" y="989.7" width="21.200" height="1.100" fill="#e0182c"/><rect x="952" y="991.9" width="21.200" height="1.100" fill="#e0182c"/><rect x="952" y="994.1" width="21.200" height="1.100" fill="#e0182c"/><rect x="952" y="996.3" width="21.200" height="1.100" fill="#e0182c"/><rect x="952" y="998.5" width="21.200" height="1.100" fill="#e0182c"/><rect x="952" y="1000.7" width="21.200" height="1.100" fill="#e0182c"/><rect x="952" y="1002.9" width="21.200" height="1.100" fill="#e0182c"/><rect x="952" y="989.700" width="9" height="6.600" fill="#1a237e"/><path d="M953 991 h7 M953 993 h7 M953 995 h7" stroke="#fff" stroke-width=".7" stroke-dasharray=".8 .8"/><g fill="none" stroke="#f2f2f2" stroke-width="1.500"><circle cx="990" cy="996.600" r="10.500"/><path d="M982.500 996.600 H998 M986 996.600 L990 992 H993.500 M987.500 996.600 L991.500 1001 H994.500"/></g><circle cx="982.500" cy="996.600" r="2" fill="#f2f2f2"/><path d="M997 994.500 l3.500 2.100 l-3.500 2.100z" fill="#f2f2f2"/><circle cx="994.500" cy="992" r="1.300" fill="#f2f2f2"/><rect x="994" y="999.800" width="2.400" height="2.400" fill="#f2f2f2"/><path d="M1007.500 993.500 h3.500 l5 -4.500 v15 l-5 -4.500 h-3.500z" fill="#f2f2f2"/><g fill="none" stroke="#f2f2f2" stroke-linecap="round"><path d="M1018.500 992 Q1021.500 996.500 1018.500 1001" stroke-width="1.600"/><path d="M1021.500 989.500 Q1026 996.500 1021.500 1003.500" stroke-width="1.600"/><path d="M1025 987 Q1031 996.500 1025 1006" stroke-width=".8" opacity=".6"/></g><g fill="none" stroke="#f2f2f2" stroke-width="1.700"><rect x="1040.500" y="988" width="11" height="9" rx="1"/><path d="M1046 997 V1004 M1036 1004.500 H1056"/></g><circle cx="1046" cy="1004.500" r="2.500" fill="#f2f2f2"/><path d="M1067 999.500 L1071 994.500 L1075 999.500 Z" fill="#f2f2f2"/><text x="1137.500" y="998.300" text-anchor="middle" font-family="Liberation Sans, sans-serif" font-size="32" fill="#f6f6f6" textLength="73" lengthAdjust="spacingAndGlyphs" stroke="#a3aeb6" stroke-width=".45">12:02</text><text x="1138.500" y="1019.500" text-anchor="middle" font-family="Liberation Sans, sans-serif" font-size="15" fill="#eaeaea" textLength="95" lengthAdjust="spacingAndGlyphs">29 июня 2016</text><path d="M1208 980 L1212 1016 Q1224 1019.500 1236 1016 L1240.500 980 Z" fill="url(#trash)"/><path d="M1208 980 L1212 1016 Q1224 1019.500 1236 1016 L1240.500 980 Z" fill="url(#mesh)" opacity=".5"/><ellipse cx="1224.200" cy="979.500" rx="17.500" ry="3.200" fill="#e9e9e9" stroke="#b5b5b5" stroke-width="1"/><ellipse cx="1224.200" cy="980" rx="14" ry="1.800" fill="#8a8a8a"/><path d="M1211.500 1013 Q1224 1017 1236.500 1013 L1236 1016.500 Q1224 1020 1212 1016.500 Z" fill="#d8d8d8"/><circle cx="1265" cy="982.500" r="11.600" fill="url(#lockg)"/><rect x="1259" y="981.500" width="12" height="8.500" rx="1" fill="#fff"/><path d="M1261.500 981.500 v-2.500 a3.500 3.500 0 0 1 7 0 v2.500" fill="none" stroke="#fff" stroke-width="1.800"/><circle cx="1265" cy="1009.800" r="11.200" fill="url(#powg)"/><path d="M1261 1005.500 A6 6 0 1 0 1269 1005.500" fill="none" stroke="#fff" stroke-width="2" stroke-linecap="round"/><path d="M1265 1002.500 v6.500" stroke="#fff" stroke-width="2" stroke-linecap="round"/></svg></div>
</body></html>
